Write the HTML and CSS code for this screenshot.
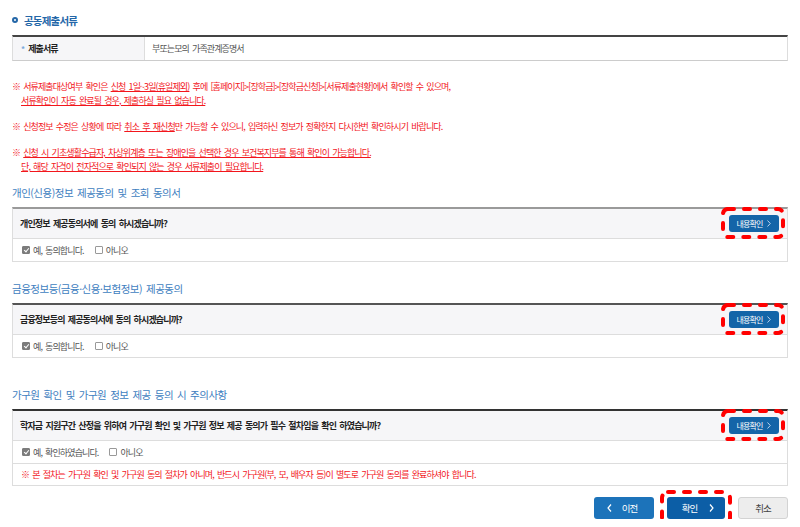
FILE: index.html
```html
<!DOCTYPE html>
<html lang="ko">
<head>
    <meta charset="UTF-8">
    <meta name="viewport" content="width=device-width, initial-scale=1.0">
    <title>공동제출서류</title>
    <link rel="stylesheet" href="styles.css">
</head>
<body>
    <div class="page">
        <h2 class="tit"><span class="ring"></span>공동제출서류</h2>
        <div class="doc">
            <div class="th"><span class="star">*</span>제출서류</div>
            <div class="td">부또는모의 가족관계증명서</div>
        </div>

        <div class="notes">
            <p>※ 서류제출대상여부 확인은 <u>신청 1일~3일(휴일제외)</u> 후에 [홈페이지]&gt;[장학금]&gt;[장학금신청]&gt;[서류제출현황]에서 확인할 수 있으며,<br><span class="ind"><u>서류확인이 자동 완료될 경우, 제출하실 필요 없습니다.</u></span></p>
            <p>※ 신청정보 수정은 상황에 따라 <u>취소 후 재신청</u>만 가능할 수 있으니, 입력하신 정보가 정확한지 다시한번 확인하시기 바랍니다.</p>
            <p>※ <u>신청 시 기초생활수급자, 차상위계층 또는 장애인을 선택한 경우 보건복지부를 통해 확인이 가능합니다.</u><br><span class="ind"><u>단, 해당 자격이 전자적으로 확인되지 않는 경우 서류제출이 필요합니다.</u></span></p>
        </div>

        <h3 class="sub">개인(신용)정보 제공동의 및 조회 동의서</h3>
        <div class="agree light">
            <div class="q">
                <span>개인정보 제공동의서에 동의 하시겠습니까?</span>
                <span class="pick">
                    <a class="more">내용확인<svg width="4" height="7" viewBox="0 0 4 7"><path d="M0.5 0.5 L3.3 3.5 L0.5 6.5" fill="none" stroke="#b9d3ee" stroke-width="1"/></svg></a>
                    <svg class="mark" width="64" height="32" viewBox="0 0 64 32"><rect x="2" y="2" width="60" height="28" rx="5" fill="none" stroke="#ff0000" stroke-width="4" stroke-dasharray="6 10" stroke-linecap="round"/></svg>
                </span>
            </div>
            <div class="ans">
                <label><i class="cb on"></i>예, 동의합니다.</label>
                <label><i class="cb"></i>아니오</label>
            </div>
        </div>

        <h3 class="sub second">금융정보등(금융·신용·보험정보) 제공동의</h3>
        <div class="agree">
            <div class="q">
                <span>금융정보등의 제공동의서에 동의 하시겠습니까?</span>
                <span class="pick">
                    <a class="more">내용확인<svg width="4" height="7" viewBox="0 0 4 7"><path d="M0.5 0.5 L3.3 3.5 L0.5 6.5" fill="none" stroke="#b9d3ee" stroke-width="1"/></svg></a>
                    <svg class="mark" width="64" height="32" viewBox="0 0 64 32"><rect x="2" y="2" width="60" height="28" rx="5" fill="none" stroke="#ff0000" stroke-width="4" stroke-dasharray="6 10" stroke-linecap="round"/></svg>
                </span>
            </div>
            <div class="ans">
                <label><i class="cb on"></i>예, 동의합니다.</label>
                <label><i class="cb"></i>아니오</label>
            </div>
        </div>

        <h3 class="sub third">가구원 확인 및 가구원 정보 제공 등의 시 주의사항</h3>
        <div class="agree dark">
            <div class="q">
                <span>학자금 지원구간 산정을 위하여 가구원 확인 및 가구원 정보 제공 동의가 필수 절차임을 확인 하였습니까?</span>
                <span class="pick">
                    <a class="more">내용확인<svg width="4" height="7" viewBox="0 0 4 7"><path d="M0.5 0.5 L3.3 3.5 L0.5 6.5" fill="none" stroke="#b9d3ee" stroke-width="1"/></svg></a>
                    <svg class="mark" width="64" height="32" viewBox="0 0 64 32"><rect x="2" y="2" width="60" height="28" rx="5" fill="none" stroke="#ff0000" stroke-width="4" stroke-dasharray="6 10" stroke-linecap="round"/></svg>
                </span>
            </div>
            <div class="ans line">
                <label><i class="cb on"></i>예, 확인하였습니다.</label>
                <label><i class="cb"></i>아니오</label>
            </div>
            <div class="warn">※ 본 절차는 가구원 확인 및 가구원 동의 절차가 아니며, 반드시 가구원(부, 모, 배우자 등)이 별도로 가구원 동의를 완료하셔야 합니다.</div>
        </div>

        <div class="btns">
            <a class="btn prev"><svg width="5" height="8" viewBox="0 0 5 8"><path d="M4 0.5 L1 4 L4 7.5" fill="none" stroke="#fff" stroke-width="1.2"/></svg>이전</a>
            <span class="pick big">
                <a class="btn next">확인<svg width="5" height="8" viewBox="0 0 5 8"><path d="M1 0.5 L4 4 L1 7.5" fill="none" stroke="#fff" stroke-width="1.2"/></svg></a>
                <svg class="mark" width="72" height="36" viewBox="0 0 72 36"><rect x="2" y="2" width="68" height="32" rx="6" fill="none" stroke="#ff0000" stroke-width="4" stroke-dasharray="6 10" stroke-linecap="round"/></svg>
            </span>
            <a class="btn cancel">취소</a>
        </div>
    </div>
</body>
</html>
```

FILE: styles.css
```css
* { box-sizing: border-box; }
body { margin: 0; background: #fff; color: #333; font-family: "Noto Sans CJK KR", sans-serif; font-size: 9px; letter-spacing: -0.9px; word-spacing: 1.5px; }
.page { padding: 12px 12px 0; }

.tit { margin: 0; height: 16px; display: flex; align-items: center; gap: 6px; font-size: 10.5px; font-weight: 700; color: #2467a8; letter-spacing: -0.8px; }
.ring { width: 6px; height: 6px; border: 2px solid #2467a8; border-radius: 50%; }

.doc { display: flex; height: 26px; margin-top: 7px; border: 1px solid #ddd; border-top: 2px solid #444; border-bottom-color: #ccc; }
.doc .th { width: 132px; display: flex; align-items: center; padding-left: 8px; background: #f6f6f8; border-right: 1px solid #ddd; font-weight: 700; color: #222; }
.star { color: #79a8da; font-size: 8px; margin-right: 4px; }
.doc .td { display: flex; align-items: center; padding-left: 7px; color: #555; }

.notes { margin-top: 19px; color: #f2161c; }
.notes p { margin: 0 0 12px; line-height: 14px; }
.notes p:last-child { margin-bottom: 0; }
.ind { padding-left: 9px; }
u { text-decoration-thickness: 1px; text-underline-offset: 1px; }

.sub { margin: 11px 0 6px; height: 16px; line-height: 16px; font-size: 10.5px; font-weight: 400; color: #3e7ec0; letter-spacing: -0.5px; }
.sub.second { margin-top: 19px; }
.sub.third { margin-top: 29px; }

.agree { border: 1px solid #ddd; border-top: 2px solid #555; }
.agree.light { border-top-color: #9a9a9a; }
.agree.dark { border-top-color: #333; }
.q { height: 30px; display: flex; align-items: center; justify-content: space-between; padding: 0 8px 0 7px; background: #f6f6f8; border-bottom: 1px solid #ddd; font-weight: 700; color: #222; letter-spacing: -0.85px; }
.ans { height: 22px; display: flex; align-items: center; gap: 11px; padding-left: 9px; color: #555; }
.ans.line { height: 23px; border-bottom: 1px solid #ddd; }
.ans label { display: flex; align-items: center; gap: 3px; }
.cb { width: 8px; height: 8px; border: 1px solid #999; border-radius: 1px; background: #fff; position: relative; }
.cb.on { background: #7c7c7c; border-color: #7c7c7c; }
.cb.on::after { content: ""; position: absolute; left: 2px; top: 0; width: 2px; height: 4px; border: solid #fff; border-width: 0 1.2px 1.2px 0; transform: rotate(40deg); }
.warn { height: 21px; display: flex; align-items: center; padding-left: 8px; color: #f2161c; }

.pick { position: relative; display: flex; }
.mark { position: absolute; left: -8px; top: -8px; }
.pick.big .mark { left: -7px; top: -7px; }
.more { width: 50px; height: 17px; display: flex; align-items: center; justify-content: center; gap: 5px; background: #1465a8; border-radius: 3px; color: #fff; font-size: 8px; font-weight: 400; letter-spacing: -0.9px; }

.btns { display: flex; justify-content: flex-end; gap: 13px; margin-top: 11px; }
.btn { height: 22px; display: flex; align-items: center; justify-content: center; border-radius: 3px; color: #fff; font-size: 9.5px; letter-spacing: -1px; }
.prev { width: 60px; gap: 10px; padding-right: 4px; background: #1c73ba; }
.next { width: 58px; gap: 12px; padding-left: 4px; background: #0c5ea6; }
.cancel { width: 50px; background: #ededed; border: 1px solid #d3d3d3; color: #444; }
```
